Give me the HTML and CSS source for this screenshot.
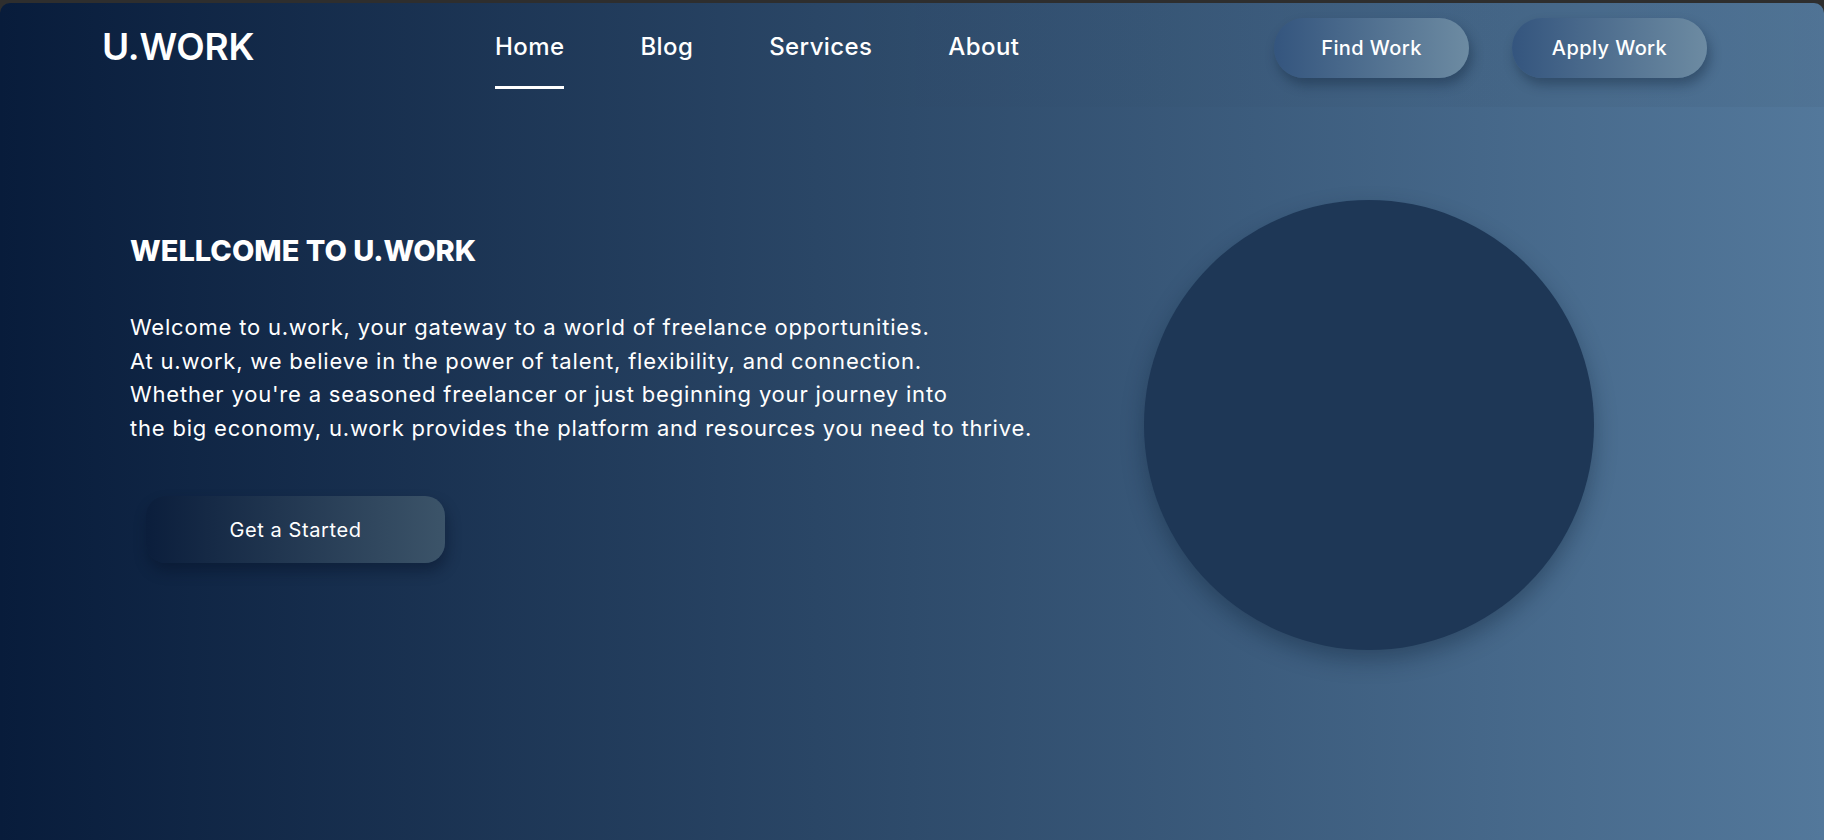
FILE: index.html
```html
<!DOCTYPE html>
<html lang="en">
<head>
<meta charset="utf-8">
<title>U.WORK</title>
<link rel="stylesheet" href="styles.css">
</head>
<body>
<div class="page">
  <header class="header">
    <div class="logo">U.WORK</div>
    <nav class="nav">
      <a class="nav-link active" href="#">Home</a>
      <a class="nav-link" href="#">Blog</a>
      <a class="nav-link" href="#">Services</a>
      <a class="nav-link" href="#">About</a>
    </nav>
    <div class="actions">
      <a class="pill" href="#">Find Work</a>
      <a class="pill" href="#">Apply Work</a>
    </div>
  </header>
  <main class="hero">
    <section class="hero-text">
      <h1 class="title">WELLCOME TO U.WORK</h1>
      <p class="lead">Welcome to u.work, your gateway to a world of freelance opportunities.<br>At u.work, we believe in the power of talent, flexibility, and connection.<br>Whether you're a seasoned freelancer or just beginning your journey into<br>the big economy, u.work provides the platform and resources you need to thrive.</p>
      <a class="start" href="#">Get a Started</a>
    </section>
    <div class="circle"></div>
  </main>
</div>
</body>
</html>
```
FILE: styles.css
```css
* { box-sizing: border-box; }
html, body { margin: 0; padding: 0; }
body {
  background: #2e2e2e;
  font-family: "Inter", "Open Sans", sans-serif;
  color: #fff;
}
a { color: inherit; text-decoration: none; }

.page {
  margin-top: 3px;
  height: 837px;
  border-radius: 10px 10px 0 0;
  overflow: hidden;
  background: linear-gradient(to right, #081c3b 0%, #2e4b6b 50%, #53789b 100%);
}

.header {
  display: flex;
  align-items: flex-start;
  height: 104px;
  padding: 15px 117px 0 102px;
  background: linear-gradient(to right, rgba(0,0,0,0) 40%, rgba(0,0,0,0.04) 100%);
}

.logo {
  flex: 0 0 393px;
  font-size: 37px;
  font-weight: 600;
  line-height: 57px;
  letter-spacing: -0.2px;
}

.nav {
  display: flex;
  gap: 76px;
}
.nav-link {
  font-size: 24px;
  font-weight: 500;
  line-height: 57px;
  letter-spacing: 0.4px;
  padding-bottom: 11px;
  border-bottom: 3px solid transparent;
}
.nav-link.active { border-bottom-color: #fff; }

.actions {
  margin-left: auto;
  display: flex;
  gap: 43px;
}
.pill {
  width: 195px;
  height: 60px;
  border-radius: 30px;
  display: flex;
  align-items: center;
  justify-content: center;
  font-size: 20px;
  font-weight: 500;
  letter-spacing: 0.4px;
  background: linear-gradient(to right, #34557e, #6d8ba2);
  box-shadow: 3px 7px 12px rgba(10, 25, 45, 0.35);
}

.hero {
  display: flex;
  align-items: flex-start;
  padding: 93px 230px 0 130px;
}
.hero-text {
  margin-top: 33px;
}
.title {
  margin: 0;
  font-size: 29px;
  font-weight: 800;
  line-height: 36px;
  letter-spacing: 0;
}
.lead {
  margin: 42px 0 0;
  font-size: 22px;
  font-weight: 400;
  line-height: 33.5px;
  letter-spacing: 0.8px;
}
.start {
  margin: 51px 0 0 16px;
  width: 299px;
  height: 67px;
  border-radius: 20px;
  display: flex;
  align-items: center;
  justify-content: center;
  font-size: 20px;
  font-weight: 400;
  letter-spacing: 0.6px;
  background: linear-gradient(to right, #0b1e3c, #3c5469);
  box-shadow: 2px 8px 14px rgba(5, 15, 35, 0.4);
}

.circle {
  margin-left: auto;
  width: 450px;
  height: 450px;
  border-radius: 50%;
  background: #1e3756;
  box-shadow: 0 10px 22px rgba(10, 25, 45, 0.35);
}
```
